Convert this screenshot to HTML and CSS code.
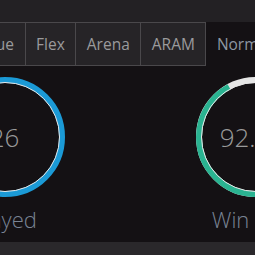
FILE: index.html
```html
<!DOCTYPE html>
<html lang="en">
<head>
  <meta charset="UTF-8">
  <title>Stats</title>
  <link rel="stylesheet" href="styles.css">
</head>
<body>
  <div class="topbar"></div>
  <nav class="tabs">
    <div class="tab">Solo Queue</div>
    <div class="tab">Flex</div>
    <div class="tab">Arena</div>
    <div class="tab">ARAM</div>
    <div class="tab activa">Normal</div>
  </nav>
  <main class="stats">
    <!-- Games played -->
    <div class="stat">
      <div class="ring">
        <svg width="120" height="120" viewBox="0 0 120 120">
          <circle cx="60" cy="60" r="57" fill="none" stroke="#1b9ad6" stroke-width="6"/>
          <circle cx="60" cy="60" r="54.5" fill="none" stroke="#e8e8e8" stroke-width="1"/>
        </svg>
        <span class="valor">26</span>
      </div>
      <div class="etiqueta">Played</div>
    </div>
    <!-- Win rate -->
    <div class="stat">
      <div class="ring">
        <svg width="120" height="120" viewBox="0 0 120 120">
          <circle cx="60" cy="60" r="57" fill="none" stroke="#e6e6e6" stroke-width="6"/>
          <circle cx="60" cy="60" r="57" fill="none" stroke="#2ab391" stroke-width="6"
                  stroke-dasharray="329.5 358.1" transform="rotate(-90 60 60)"/>
          <circle cx="60" cy="60" r="54.5" fill="none" stroke="#e8e8e8" stroke-width="1"/>
        </svg>
        <span class="valor">92.3%</span>
      </div>
      <div class="etiqueta">Win Rate</div>
    </div>
  </main>
  <footer class="pie"></footer>
</body>
</html>
```

FILE: styles.css
```css
body {
  margin: 0;
  background-color: #141114;
  font-family: "Open Sans", "Noto Sans", sans-serif;
  overflow: hidden;
}
.topbar {
  height: 22px;
  background-color: #232124;
}
.tabs {
  display: flex;
  height: 44px;
  margin-left: -80px;
  background-color: #232124;
}
.tab {
  flex: none;
  padding: 0 10.5px;
  border: 1px solid #4a484b;
  border-left: none;
  background-color: #262427;
  color: #9a9a9c;
  font-size: 15.5px;
  line-height: 42px;
}
.tab.activa {
  background-color: #141114;
  border-color: #141114;
  color: #8d97a3;
}
.stats {
  display: flex;
  height: 176px;
  margin-left: -121px;
}
.stat {
  flex: none;
  width: 251px;
  display: flex;
  flex-direction: column;
  align-items: center;
  padding-top: 11px;
}
.ring {
  position: relative;
  width: 120px;
  height: 120px;
}
.ring svg {
  display: block;
}
.valor {
  position: absolute;
  left: -40px;
  right: -40px;
  top: 0;
  line-height: 120px;
  text-align: center;
  font-size: 26px;
  font-weight: 300;
  color: #9a9a9a;
}
.etiqueta {
  margin-top: 7px;
  font-size: 22px;
  font-weight: 300;
  color: #7a8494;
  white-space: nowrap;
}
.pie {
  height: 13px;
  background-color: #2a282b;
}
```
